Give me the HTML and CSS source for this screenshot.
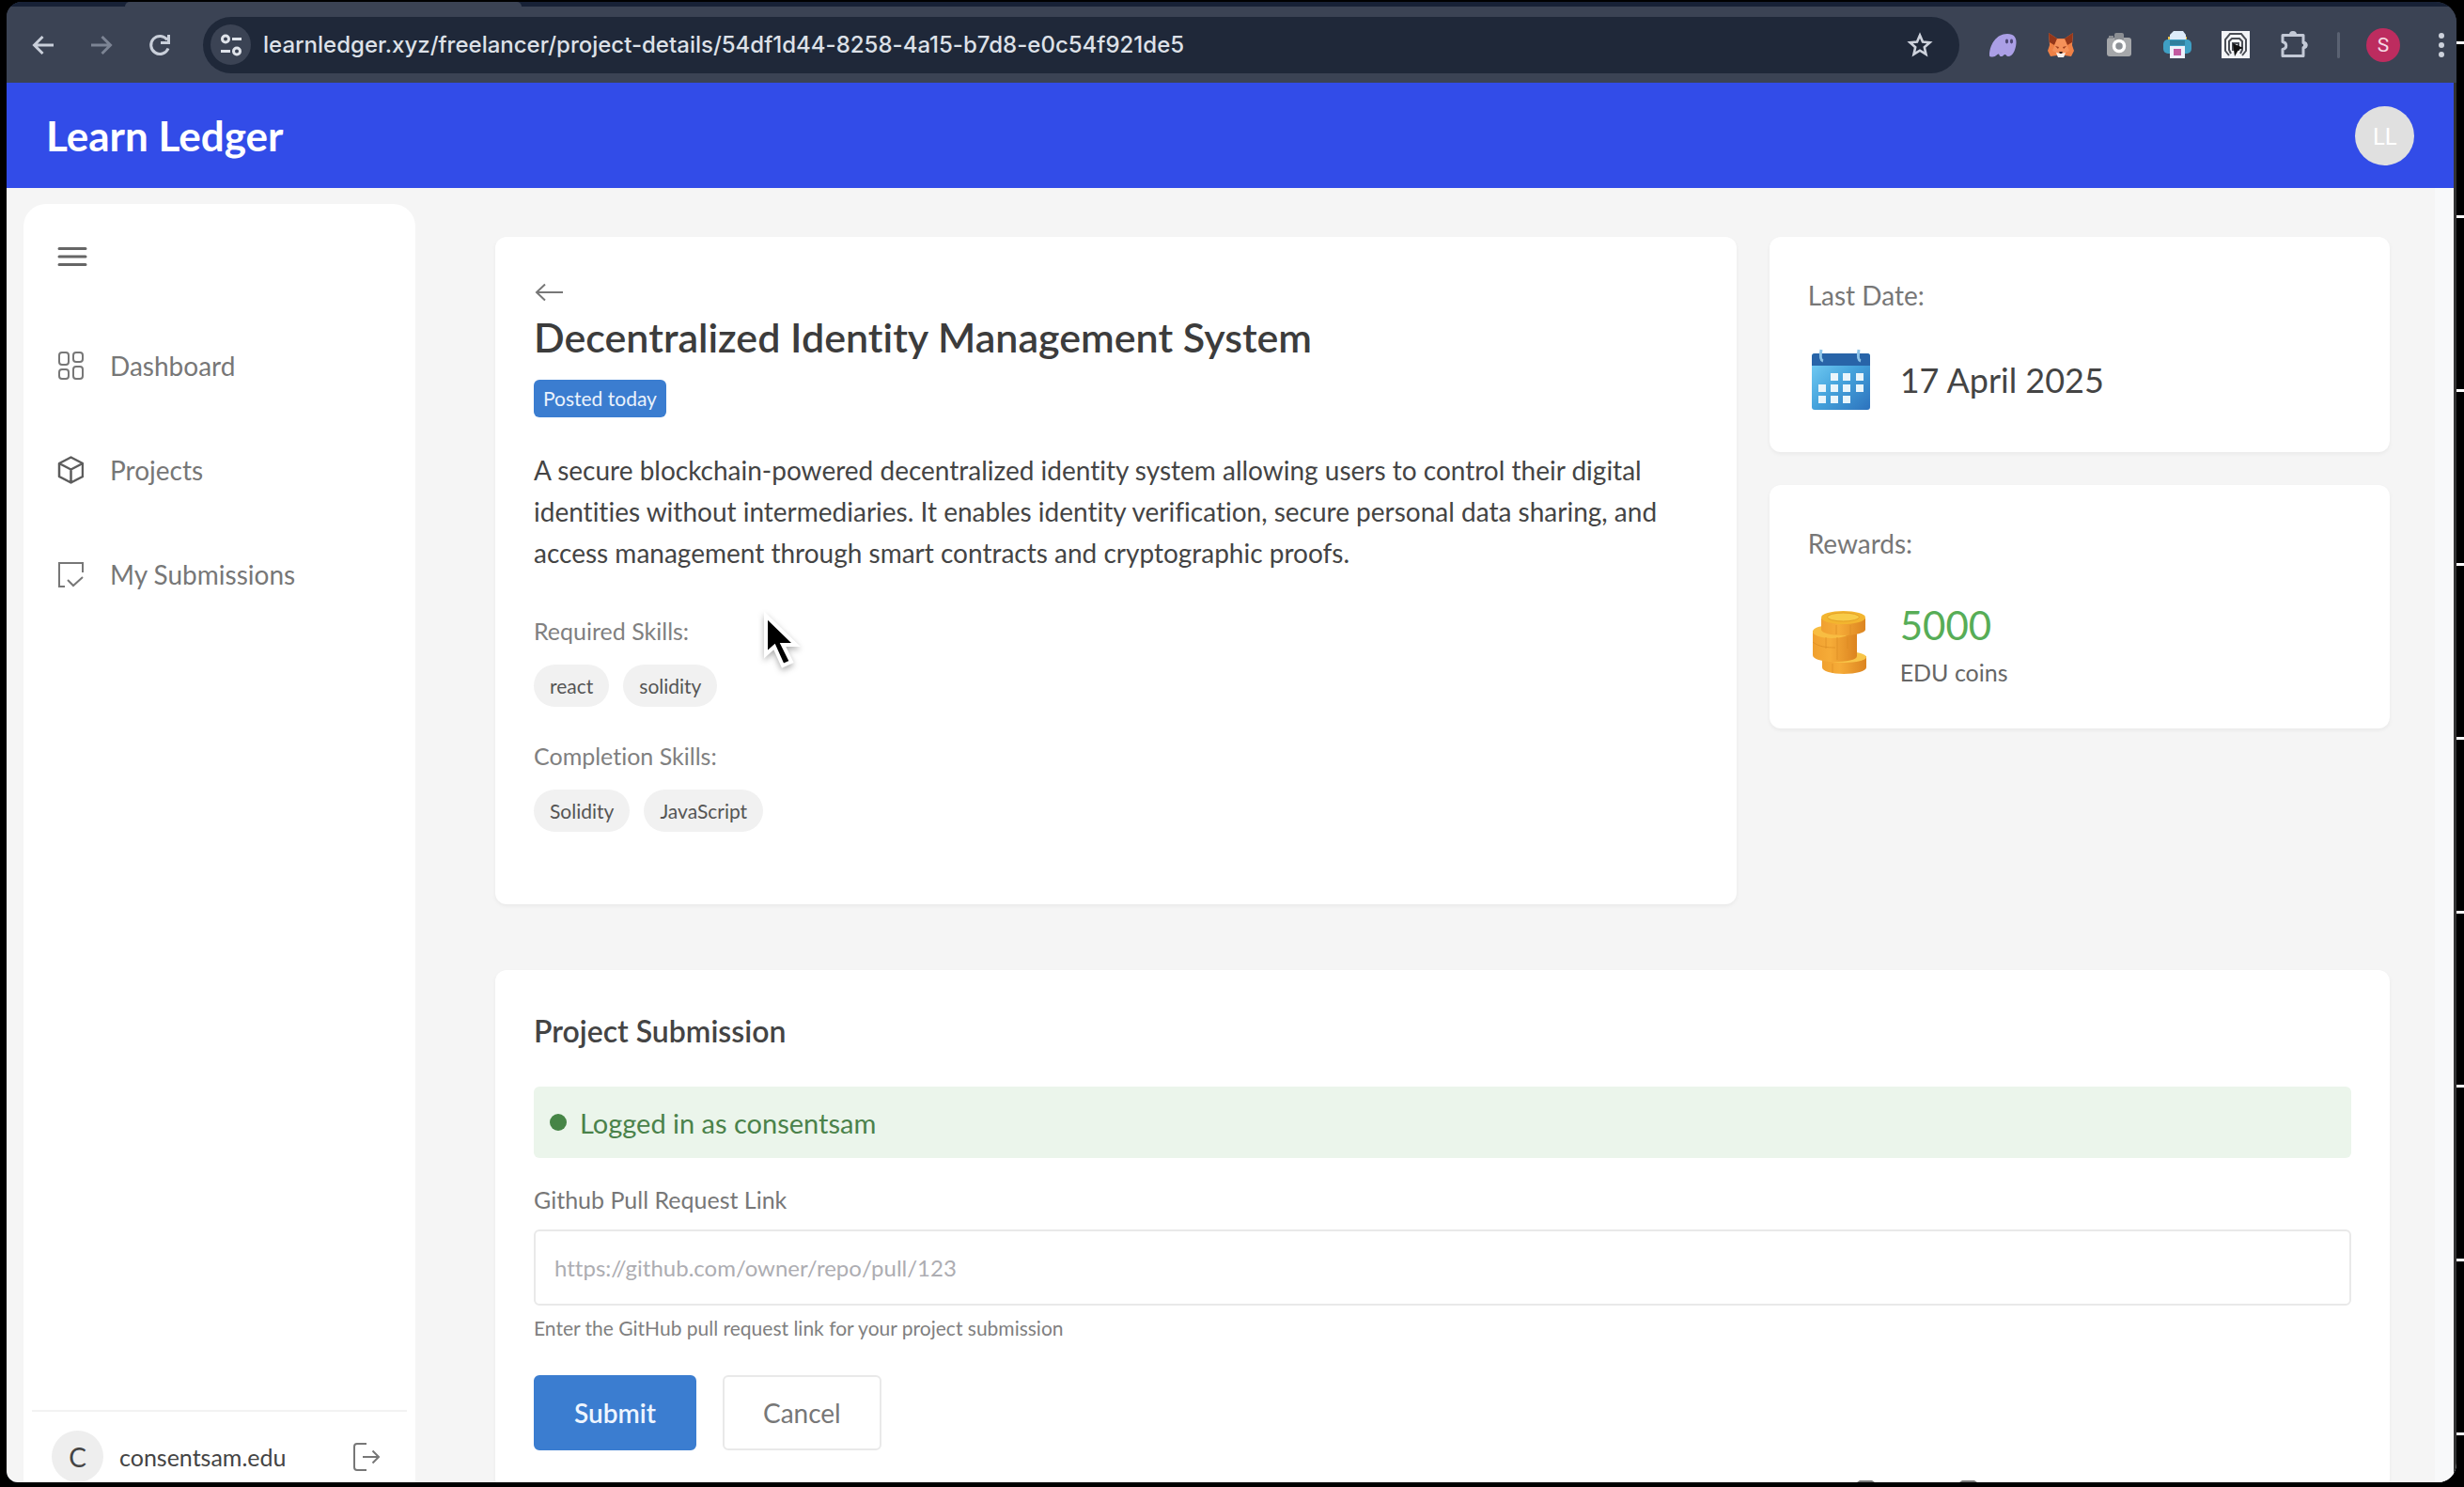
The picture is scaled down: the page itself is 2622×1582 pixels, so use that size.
FILE: index.html
```html
<!DOCTYPE html>
<html lang="en">
<head>
<meta charset="utf-8">
<meta name="viewport" content="width=device-width, initial-scale=1">
<title>Learn Ledger</title>
<link rel="stylesheet" href="styles.css">
</head>
<body>
<div class="window">
  <div class="tabstrip"><div class="tabstrip-active"></div></div>
  <div class="toolbar">
    <div class="nav-buttons">
      <button class="icon-button" aria-label="Back"><svg width="28" height="28" viewBox="0 0 28 28" fill="none" stroke="#c9cfda" stroke-width="3"><path d="M25 14H5M13.500 5L4.500 14l9 9"/></svg></button>
      <button class="icon-button" aria-label="Forward"><svg width="28" height="28" viewBox="0 0 28 28" fill="none" stroke="#7c8494" stroke-width="3"><path d="M3 14h20M14.500 5l9 9-9 9"/></svg></button>
      <button class="icon-button" aria-label="Reload"><svg width="28" height="28" viewBox="0 0 28 28" fill="none" stroke="#c9cfda" stroke-width="3"><path d="M23 17.500A9.500 9.500 0 1 1 22 8.500"/><path d="M23.500 3v8.500H15"/></svg></button>
    </div>
    <div class="address">
      <button class="site-info" aria-label="Site information"><svg width="28" height="28" viewBox="0 0 28 28" fill="none" stroke="#dfe3ea" stroke-width="3"><circle cx="8" cy="7.500" r="3.500"/><path d="M15 7.500h10M3 20.500h10"/><circle cx="20" cy="20.500" r="3.500"/></svg></button>
      <input class="address-input" type="text" aria-label="Address" value="learnledger.xyz/freelancer/project-details/54df1d44-8258-4a15-b7d8-e0c54f921de5">
      <button class="icon-button" aria-label="Bookmark"><svg width="28" height="28" viewBox="0 0 28 28" fill="none" stroke="#cdd2dc" stroke-width="2.600" stroke-linejoin="miter"><path d="M14 3.500l3 7 7.500.7-5.700 5 1.700 7.500L14 19.700l-6.500 4 1.700-7.500-5.700-5 7.500-.7z"/></svg></button>
    </div>
    <div class="extensions">
      <button class="icon-button" aria-label="Phantom"><svg width="32" height="32" viewBox="0 0 32 32"><path fill="#ab9fe6" d="M2 27C2 16 9 4 21 4c7 0 10 4 9.500 10-.7 8-4 14-8.500 14-2 0-2-2-3.500-2S17 28 14.500 28 13 25.500 11.500 25.500 9 28.500 5.500 28.500C3 28.500 2 28 2 27z"/><ellipse cx="20.500" cy="12" rx="1.600" ry="2.400" fill="#4d4775"/><ellipse cx="25.500" cy="12" rx="1.600" ry="2.400" fill="#4d4775"/></svg></button>
      <button class="icon-button" aria-label="MetaMask"><svg width="32" height="32" viewBox="0 0 32 32"><path fill="#ef8146" d="M3 3l9 6h8l9-6-1 13 2 6-3 6-7-1-2 2h-4l-2-2-7 1-3-6 2-6z"/><path fill="#93361a" d="M3 3l9 6-3 7-5-3zM29 3l-9 6 3 7 5-3z"/><path fill="#f5915a" d="M12 10h8l3 7 2 5-6 3h-6l-6-3 2-5z"/><path fill="#9c3c1c" d="M10 17l4 1-1 2zM22 17l-4 1 1 2z"/><path fill="#f7f1ed" d="M11 24l5 1 5-1-2 5h-6z"/><path fill="#331b16" d="M14 23h4l-1 2h-2z"/></svg></button>
      <button class="icon-button" aria-label="Screenshot"><svg width="32" height="32" viewBox="0 0 32 32"><rect x="3" y="8" width="26" height="20" rx="3" fill="#a5a7aa"/><rect x="11" y="3" width="10" height="8" rx="2" fill="#8b8e93"/><rect x="5" y="6" width="5" height="3" fill="#8b8e93"/><circle cx="16" cy="17" r="5.500" fill="#8c9096" stroke="#fff" stroke-width="3.500"/></svg></button>
      <button class="icon-button" aria-label="Print"><svg width="32" height="32" viewBox="0 0 32 32"><path d="M6 7h20v5H6z" fill="#e8c24c"/><path d="M12 1h10l3 4v7H8V5z" fill="#dcebfa"/><rect x="1" y="10" width="30" height="15" rx="5" fill="#3f9fc4"/><path d="M8 11h16v5H8z" fill="#317f9d"/><path d="M8 17h16v13H8z" fill="#eef1fb"/><path d="M12 20h8v7h-8z" fill="#c25aa0"/></svg></button>
      <button class="icon-button" aria-label="Fingerprint"><svg width="32" height="32" viewBox="0 0 32 32"><path fill="#f3f5f8" d="M1 1h30v29H1z"/><g fill="none" stroke="#4a4e55" stroke-width="2"><path d="M9 27l-4-5V10l5-6h12l5 6v12l-4 5"/><path d="M11 25l-2-4v-9l3-3h8l3 3v9l-2 4"/><path d="M13 22v-8h6v8"/></g><path fill="#111" d="M13 14l11 5-5 2-4 7z"/></svg></button>
      <button class="icon-button" aria-label="Extensions"><svg width="32" height="32" viewBox="0 0 32 32" fill="none" stroke="#c3c9d6" stroke-width="3" stroke-linejoin="round"><path d="M4 5.500h22v8c4 0 4 5 0 5v9H4v-7c5-1 5-7 0-8z"/><path fill="#c3c9d6" stroke="none" d="M11 5a4 4 0 0 1 8 0zM26 12c6 0 6 8 0 8z"/></svg></button>
      <span class="divider"></span>
      <button class="profile" aria-label="Profile">S</button>
      <button class="icon-button" aria-label="Menu"><svg width="32" height="32" viewBox="0 0 32 32" fill="#ccd1db"><circle cx="16" cy="6" r="3"/><circle cx="16" cy="16" r="3"/><circle cx="16" cy="26" r="3"/></svg></button>
    </div>
  </div>

  <div class="site">
    <header class="site-header">
      <a class="brand" href="#">Learn Ledger</a>
      <button class="account" aria-label="Account">LL</button>
    </header>
    <div class="layout">
      <aside class="sidebar">
        <button class="icon-button menu-toggle" aria-label="Toggle menu"><svg width="32" height="32" viewBox="0 0 32 32" stroke="#666" stroke-width="3" stroke-linecap="round"><path d="M2 7.500h28M2 16h28M2 24.500h28"/></svg></button>
        <nav class="side-nav">
          <a class="side-link" href="#"><svg width="28" height="32" viewBox="0 0 28 32" fill="none" stroke="#777" stroke-width="2"><rect x="2" y="2" width="10" height="13" rx="3"/><rect x="17" y="2" width="10" height="10" rx="3"/><rect x="2" y="20" width="10" height="10" rx="3"/><rect x="17" y="17" width="10" height="13" rx="3"/></svg>Dashboard</a>
          <a class="side-link" href="#"><svg width="28" height="32" viewBox="0 0 28 32" fill="none" stroke="#5c5c5c" stroke-width="2.500" stroke-linejoin="round"><path d="M14.500 2.500L27 9v14l-12.500 6.500L2 23V9zM2 9l12.500 6.500L27 9M14.500 15.500v14"/></svg>Projects</a>
          <a class="side-link" href="#"><svg width="28" height="32" viewBox="0 0 28 32" fill="none" stroke="#777" stroke-width="2"><path d="M8 29H2V4h25v10M11 22l6 6 10-9"/></svg>My Submissions</a>
        </nav>
        <div class="side-user">
          <span class="side-avatar">C</span>
          <span class="side-name">consentsam.edu</span>
          <button class="icon-button" aria-label="Log out"><svg width="30" height="34" viewBox="0 0 30 34" fill="none" stroke="#777" stroke-width="2"><path d="M15 3H5q-3 0-3 3v22q0 3 3 3h10M11 17h17M21.500 10.500L28 17l-6.500 6.500"/></svg></button>
        </div>
      </aside>

      <main class="content">
        <div class="top-grid">
          <section class="card project">
            <a class="back-link" href="#" aria-label="Back to projects"><svg width="32" height="34" viewBox="0 0 32 34" fill="none" stroke="#777" stroke-width="2"><path d="M31 17H3M12 8.500L3 17l9 8.500"/></svg></a>
            <h1 class="project-title">Decentralized Identity Management System</h1>
            <span class="badge">Posted today</span>
            <p class="description">A secure blockchain-powered decentralized identity system allowing users to control their digital identities without intermediaries. It enables identity verification, secure personal data sharing, and access management through smart contracts and cryptographic proofs.</p>
            <h2 class="skills-label">Required Skills:</h2>
            <ul class="pills"><li class="pill">react</li><li class="pill">solidity</li></ul>
            <h2 class="skills-label">Completion Skills:</h2>
            <ul class="pills"><li class="pill">Solidity</li><li class="pill">JavaScript</li></ul>
          </section>
          <div class="side-cards">
            <section class="card">
              <h2 class="fact-label">Last Date:</h2>
              <div class="fact">
                <svg width="70" height="70" viewBox="0 0 70 70"><defs><linearGradient id="cal" x1="0" y1="0" x2="1" y2="1"><stop offset="0" stop-color="#7ad3f8"/><stop offset=".5" stop-color="#45a3dc"/><stop offset="1" stop-color="#2c72bd"/></linearGradient></defs><rect x="4" y="7" width="62" height="60" rx="3" fill="url(#cal)"/><path d="M4 20V10q0-3 3-3h56q3 0 3 3v10z" fill="#2864a8"/><path d="M14 3q-2 11 2 12M54 3q-2 11 2 12" stroke="#8ec4e8" stroke-width="3" fill="none"/><g fill="#e9f5fb"><path d="M24 28h8v8h-8zM37 28h8v8h-8zM51 28h8v8h-8zM11 40h8v8h-8zM24 40h8v8h-8zM37 40h8v8h-8zM51 40h8v8h-8zM11 52h8v8h-8zM24 52h8v8h-8zM37 52h8v8h-8z"/></g></svg>
                <p class="date">17 April 2025</p>
              </div>
            </section>
            <section class="card">
              <h2 class="fact-label">Rewards:</h2>
              <div class="fact">
                <svg width="70" height="70" viewBox="0 0 70 70"><defs><linearGradient id="coin" x1="0" y1="0" x2="1" y2="0"><stop offset="0" stop-color="#f0a02f"/><stop offset=".4" stop-color="#f6ac38"/><stop offset="1" stop-color="#dc8420"/></linearGradient></defs><path fill="url(#coin)" d="M15 54v8c0 4 10 7 23 7s24-3 24-7V50z"/><ellipse cx="38.500" cy="51" rx="23.500" ry="6" fill="#f8c548"/><path fill="url(#coin)" d="M5 23v26c0 4 9 7 22 7 14 0 25-2 25-6V21z"/><ellipse cx="25" cy="24" rx="20" ry="7" fill="#f8bd42"/><path fill="url(#coin)" d="M14 10v12c0 3 10 6 23 6s24-3 24-6V10z"/><ellipse cx="37.500" cy="9" rx="23.500" ry="7" fill="#f3b52f"/><ellipse cx="37.500" cy="8.500" rx="17" ry="4.500" fill="#f8cb48" stroke="#e4a025"/><path d="M30 17v10M45 17v10M19 30v12M31 30v12M31 42v12M42 30v12M5 35c6 5 15 6 24 6M26 58v10" stroke="#dc8b22" fill="none" opacity=".7"/></svg>
                <div>
                  <p class="amount">5000</p>
                  <p class="unit">EDU coins</p>
                </div>
              </div>
            </section>
          </div>
        </div>

        <section class="card submission">
          <h2 class="submission-title">Project Submission</h2>
          <div class="alert"><span class="dot"></span>Logged in as consentsam</div>
          <form class="form">
            <label class="field-label" for="pr">Github Pull Request Link</label>
            <input class="field" id="pr" type="url" placeholder="https://github.com/owner/repo/pull/123">
            <p class="help">Enter the GitHub pull request link for your project submission</p>
            <div class="actions">
              <button class="button primary" type="submit">Submit</button>
              <button class="button" type="reset">Cancel</button>
            </div>
          </form>
        </section>
      </main>
      <div class="scroll-track"></div>
    </div>
  </div>
  <svg class="peek" width="128" height="3" viewBox="0 0 128 3" fill="#777"><path d="M0 3l3-2h13l3 2zM109 3l3-2h13l3 2z"/></svg>
</div>
<svg class="cursor" width="44" height="66" viewBox="0 0 44 66"><path d="M4 6v41l9-8 9 20 9-4-9-18h14z" fill="#000" stroke="#fff" stroke-width="4"/></svg>
</body>
</html>
```
FILE: styles.css
```css
* { box-sizing: border-box; }

body {
  margin: 0;
  height: 100vh;
  padding: 2px 8px 5px 7px;
  overflow: hidden;
  background: #000 repeating-linear-gradient(#fff 0 3px, #000 3px 185px) right 44px / 8px 185px repeat-y;
  font-family: Lato, "Open Sans", sans-serif;
  font-size: 28px;
  font-variant-ligatures: none;
  color: #444;
}

h1, h2, p, ul { margin: 0; padding: 0; font-weight: 400; }
a { color: inherit; text-decoration: none; }
svg { display: block; flex: none; }
button, input { font: inherit; color: inherit; }

.icon-button {
  display: block;
  padding: 0;
  border: 0;
  background: none;
}

/* Browser frame */
.window {
  position: relative;
  display: flex;
  flex-direction: column;
  height: 100%;
  overflow: hidden;
  border-radius: 16px 22px 20px 12px;
  background: #3b4354;
}

.tabstrip {
  flex: none;
  height: 5px;
  padding-left: 126px;
  background: #172136;
}

.tabstrip-active {
  width: 422px;
  height: 5px;
  border-radius: 8px 8px 0 0;
  background: #3b4354;
}

.toolbar {
  display: flex;
  flex: none;
  align-items: center;
  height: 81px;
  padding-left: 25px;
  background: #3b4354;
}

.nav-buttons { display: flex; gap: 34px; }

.address {
  display: flex;
  flex: 1;
  align-items: center;
  height: 60px;
  margin: 0 30px 0 32px;
  padding: 0 28px 0 8px;
  border-radius: 30px;
  background: #1f2839;
}

.site-info {
  display: grid;
  place-items: center;
  width: 43px;
  height: 43px;
  padding: 0;
  border: 0;
  border-radius: 50%;
  background: #3b4354;
}

.address-input {
  flex: 1;
  margin-left: 13px;
  padding: 0;
  border: 0;
  background: none;
  font-family: Inter, sans-serif;
  font-size: 24px;
  font-weight: 500;
  color: #dde1e8;
}

.extensions { display: flex; align-items: center; gap: 30px; }
.divider { width: 3px; height: 28px; border-radius: 2px; background: #5a6272; }

.profile {
  width: 36px;
  height: 36px;
  margin: 0 -2px;
  padding: 0;
  border: 0;
  border-radius: 50%;
  background: #bd2c5f;
  font-family: Roboto, sans-serif;
  font-size: 21px;
  color: #f6d9e4;
}

/* Site */
.site {
  display: flex;
  flex: 1;
  flex-direction: column;
  min-height: 0;
  border-right: 3px solid #333;
  background: #f5f5f5;
}

.site-header {
  display: flex;
  flex: none;
  align-items: center;
  justify-content: space-between;
  height: 112px;
  padding: 0 42px;
  background: #324ce8;
  color: #fff;
}

.brand { font-size: 44px; font-weight: 700; }

.account {
  width: 63px;
  height: 63px;
  padding: 0;
  border: 0;
  border-radius: 50%;
  background: #e0e0e0;
  font-size: 25px;
  color: #fff;
}

.layout { display: flex; flex: 1; min-height: 0; }

.sidebar {
  display: flex;
  flex: none;
  flex-direction: column;
  width: 417px;
  margin: 17px 0 0 18px;
  padding: 40px 9px 0;
  border-radius: 24px 24px 0 0;
  background: #fff;
}

.menu-toggle { margin: 0 27px 44px; }

.side-link {
  display: flex;
  align-items: center;
  gap: 28px;
  height: 111px;
  padding-left: 27px;
  color: #777;
}

.side-user {
  display: flex;
  align-items: center;
  margin-top: auto;
  padding: 20px 28px 0 21px;
  border-top: 2px solid #f2f2f2;
}

.side-avatar {
  display: grid;
  place-items: center;
  width: 55px;
  height: 55px;
  border-radius: 50%;
  background: #eee;
}

.side-name { flex: 1; margin-left: 17px; font-size: 25px; }

.content { flex: 1; min-width: 0; padding: 52px 48px 0 85px; }
.scroll-track { flex: none; width: 20px; background: #f8f9fa; }

.top-grid {
  display: grid;
  grid-template-columns: 2fr 1fr;
  gap: 35px;
  margin-bottom: 70px;
}

.side-cards { display: flex; flex-direction: column; gap: 35px; }

.card {
  padding: 42px 41px;
  border-radius: 12px;
  background: #fff;
  box-shadow: 0 2px 4px rgba(0, 0, 0, .05);
}

/* Project details */
.project { padding-bottom: 77px; }
.back-link { display: inline-block; vertical-align: top; }

.project-title {
  font-size: 43px;
  font-weight: 600;
  line-height: 62px;
  color: #3c3c3c;
}

.badge {
  display: block;
  width: fit-content;
  margin: 14px 0 34px;
  padding: 0 10px;
  border-radius: 6px;
  background: #3b7dd0;
  font-size: 21px;
  line-height: 40px;
  color: #eaf2fc;
}

.description { line-height: 44px; }

.skills-label {
  margin-top: 34px;
  font-size: 25px;
  line-height: 36px;
  color: #808080;
}

.description + .skills-label { margin-top: 43px; }

.pills {
  display: flex;
  gap: 15px;
  margin-top: 18px;
  list-style: none;
}

.pill {
  padding: 0 17px;
  border-radius: 23px;
  background: #f1f1f1;
  font-size: 21px;
  line-height: 45px;
  color: #555;
}

.fact-label {
  margin-bottom: 35px;
  font-size: 28px;
  line-height: 40px;
  color: #777;
}

.fact { display: flex; align-items: center; gap: 28px; }
.date { font-size: 36px; }
.amount { font-size: 42px; line-height: 64px; color: #57ad57; }
.unit { font-size: 25px; line-height: 36px; color: #666; }

/* Submission form */
.submission-title {
  font-size: 32px;
  font-weight: 600;
  line-height: 46px;
}

.alert {
  display: flex;
  align-items: center;
  gap: 14px;
  height: 76px;
  margin: 36px 0 26px;
  padding-left: 17px;
  border-radius: 6px;
  background: #ebf5eb;
  font-size: 29px;
  color: #4a824a;
}

.dot { width: 18px; height: 18px; border-radius: 50%; background: #468546; }

.field-label {
  display: block;
  margin-bottom: 14px;
  font-size: 25px;
  line-height: 36px;
  color: #777;
}

.field {
  display: block;
  width: 100%;
  height: 81px;
  padding: 0 20px;
  border: 2px solid #e9e9e9;
  border-radius: 6px;
  background: #fff;
  font-size: 24px;
}

.field::placeholder { color: #adadb2; opacity: 1; }

.help {
  margin: 10px 0 36px;
  font-size: 21px;
  line-height: 28px;
  color: #808080;
}

.actions { display: flex; gap: 28px; }

.button {
  height: 80px;
  padding: 0 41px;
  border: 2px solid #e9e9e9;
  border-radius: 6px;
  background: #fff;
  color: #777;
}

.primary {
  border-color: #3b7dd0;
  background: #3b7dd0;
  font-weight: 600;
  color: #eef5ff;
}

/* Overlays */
.peek { position: absolute; right: 510px; bottom: 0; }
.cursor { position: absolute; left: 811px; top: 649px; filter: drop-shadow(0 3px 3px rgba(0, 0, 0, .3)); }
```
